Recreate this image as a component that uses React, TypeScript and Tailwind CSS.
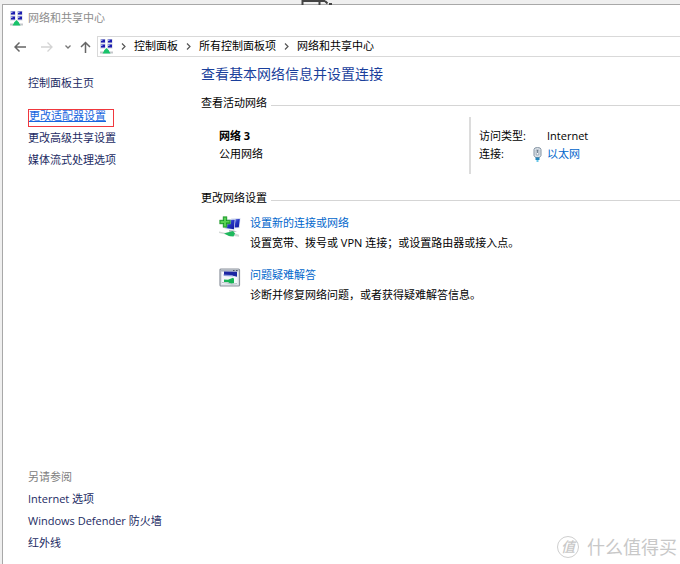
import React from "react";

interface Task {
  title: string;
  description: string;
  icon: React.ReactNode;
}

const crumbs = ["控制面板", "所有控制面板项", "网络和共享中心"];

const seeAlso = ["Internet 选项", "Windows Defender 防火墙", "红外线"];

const NetworkIcon = () => (
  <svg width="13" height="15" viewBox="0 0 13 15" className="shrink-0" aria-hidden="true">
    {[0, 7].map((x) =>
      [0, 5].map((y) => (
        <g key={`${x}-${y}`}>
          <rect x={x} y={y} width="5.500" height="4.500" fill="#d3d7e0" />
          <rect x={x + 1} y={y + 0.5} width="4" height="3" fill="#1c1cb0" />
          <path d={`M${x + 1} ${y + 0.5}h1.500v1.500h-1.500z`} fill="#a9b2ee" />
        </g>
      ))
    )}
    <path d="M0 12.500h13v2H0z" fill="#c4c7cb" />
    <path d="M6.500 9l2.500 2.500V12l1.500 2.500h-8L4 12v-.5z" fill="#18c36a" />
  </svg>
);

const NewConnectionIcon = () => (
  <svg width="22" height="22" viewBox="0 0 22 22" aria-hidden="true">
    <defs>
      <linearGradient id="screen" x1="0" y1="0" x2="1" y2="1">
        <stop offset="0" stopColor="#8fa4ee" />
        <stop offset="0.5" stopColor="#2634c4" />
        <stop offset="1" stopColor="#10189a" />
      </linearGradient>
    </defs>
    <path d="M12 2.500l9.500-.5-1 10-7 .5z" fill="#d5dcee" />
    <path d="M13 3.200l7.800-.3-1 8.300-5.500.3z" fill="url(#screen)" />
    <path d="M5 3.500l11.500-.5-1 11L5.500 13z" fill="#dfe6f5" />
    <path d="M6 4l9.700-.3-.8 9.500L6.500 12z" fill="url(#screen)" />
    <path d="M10 14l5 .5 3 1.500-8-.3z" fill="#b4b8be" />
    <path d="M0 15.500l6 1.200 5-1 3 1 6 2v2l-5-.8-4 .6-4-2-7-1.500z" fill="#d3d8d6" />
    <path d="M5 17.500l9-2.500 2 2.500-1.500 3-4.500-.5z" fill="#1db95c" />
    <path d="M4 .5h4V4h3.500v4H8v3.500H4V8H.5V4H4z" fill="#159a25" stroke="#71bd76" strokeWidth=".6" />
    <path d="M5 1.500h2V5h3.500v1.500H7v4H5V7H1.500V5H5z" fill="#58d252" />
  </svg>
);

const TroubleshootIcon = () => (
  <svg width="22" height="19" viewBox="0 0 22 19" aria-hidden="true">
    <rect x="1" y="1" width="19.500" height="17" rx="1" fill="#dfe4ea" stroke="#8b929c" strokeWidth="1.200" />
    <path d="M2 2h17.500v1.500H2z" fill="#aeb6c2" />
    <path d="M14 2h1.500v1H14zM17 2h1.500v1H17z" fill="#4c5666" />
    <path d="M3 4h15.500v12H3z" fill="#f5f7fa" />
    <path d="M5 3.500l13 .3v5L13 7.500 5 7z" fill="#1b26a2" />
    <path d="M4 6.500l8 .5 3 1.500-10-.5z" fill="#8c9ddc" />
    <path d="M5 11.500l4 .3 5-2 1 1v4.500l-3 .5-3-1.500-4-.3z" fill="#17b455" />
    <path d="M3 14.500l5 .5 5 1.200 5-.7" fill="none" stroke="#b5bec4" />
  </svg>
);

const PlugIcon = () => (
  <svg width="9" height="15" viewBox="0 0 9 15" aria-hidden="true">
    <path d="M1 2.500Q1 .5 4.500.5T8 2.500V8.500L6.500 10.500h-4L1 8.500z" fill="#dce2e8" stroke="#8493a2" />
    <path d="M3.200 3h2.600v5H3.200z" fill="#f9fafb" stroke="#8d9ba9" strokeWidth=".8" />
    <path d="M4.500 3v3" stroke="#58697b" strokeWidth=".8" />
    <path d="M2.500 10.500h4V13h-4z" fill="#2387bd" />
    <path d="M3.500 13h2v2h-2z" fill="#69c7e8" />
  </svg>
);

const Chevron = () => (
  <svg width="21" height="9" viewBox="0 0 21 9" className="shrink-0" aria-hidden="true">
    <path d="M9 1.500l3 3-3 3" fill="none" stroke="#555" strokeWidth="1.200" />
  </svg>
);

const tasks: Task[] = [
  {
    title: "设置新的连接或网络",
    description: "设置宽带、拨号或 VPN 连接；或设置路由器或接入点。",
    icon: <NewConnectionIcon />,
  },
  {
    title: "问题疑难解答",
    description: "诊断并修复网络问题，或者获得疑难解答信息。",
    icon: <TroubleshootIcon />,
  },
];

const SectionTitle = ({ children }: { children: React.ReactNode }) => (
  <div className="flex items-center gap-1 h-5">
    <h2 className="shrink-0">{children}</h2>
    <span className="mt-1 h-px grow bg-[#d5d5d5]"></span>
  </div>
);

const Toolbar = () => (
  <nav className="flex items-center py-[5px] pl-[11px]">
    <button aria-label="后退" className="w-3">
      <svg width="12" height="12" viewBox="0 0 12 12" fill="none" stroke="#666" strokeWidth="1.500">
        <path d="M12 6H1M5.500 1.500L1 6l4.500 4.500" />
      </svg>
    </button>
    <button aria-label="前进" className="ml-[15px] w-3" disabled>
      <svg width="12" height="12" viewBox="0 0 12 12" fill="none" stroke="#d4d4d4" strokeWidth="1.300">
        <path d="M0 6h11M6.500 1.500L11 6l-4.500 4.500" />
      </svg>
    </button>
    <button aria-label="最近的位置" className="ml-3 w-2">
      <svg width="6" height="6" viewBox="0 0 6 6" fill="none" stroke="#777" strokeWidth="1.300">
        <path d="M.5 1.500L3 4l2.500-2.500" />
      </svg>
    </button>
    <button aria-label="向上" className="ml-[7px] w-3">
      <svg width="11" height="12" viewBox="0 0 11 12" fill="none" stroke="#666" strokeWidth="1.500">
        <path d="M5.500 12V1.500M1 6l4.500-4.500L10 6" />
      </svg>
    </button>
    <div className="ml-[5px] flex h-[21px] grow items-center border border-r-0 border-[#d9d9d9] pl-[2px] text-black">
      <NetworkIcon />
      {crumbs.map((crumb) => (
        <React.Fragment key={crumb}>
          <Chevron />
          <button className="shrink-0">{crumb}</button>
        </React.Fragment>
      ))}
    </div>
  </nav>
);

const Sidebar = () => (
  <aside className="flex w-[198px] shrink-0 flex-col pl-[25px] py-[10px] leading-[22px] text-[#1c2b63]">
    <a href="#home">控制面板主页</a>
    <ul className="mt-[11px]">
      <li className="h-[22px] pt-1">
        <a href="#adapter" className="block h-[18px] w-[86px] whitespace-nowrap border border-[#f0383e] leading-3 text-[#1766e0] underline">
          更改适配器设置
        </a>
      </li>
      <li><a href="#sharing">更改高级共享设置</a></li>
      <li><a href="#media">媒体流式处理选项</a></li>
    </ul>
    <div className="mt-auto">
      <h2 className="text-[#808080]">另请参阅</h2>
      <ul>
        {seeAlso.map((item) => (
          <li key={item}><a href="#see-also">{item}</a></li>
        ))}
      </ul>
    </div>
  </aside>
);

const App = () => {
  return (
    <div className="relative flex min-h-screen flex-col bg-[#efefef] pl-[2px] pt-1 text-[11px] font-['Open_Sans','Noto_Sans_CJK_SC',sans-serif]">
      <svg width="32" height="5" viewBox="0 0 32 5" className="absolute left-[301px] top-0" aria-hidden="true">
        <path d="M1.500 5V1h17v4M18 1h6M24 1l2.500 2.500M28 4h3" fill="none" stroke="#444" strokeWidth="2" />
      </svg>
      <div className="flex grow flex-col border-l border-t border-[#a8a8a8] bg-white">
        <header className="flex h-[26px] items-center gap-[5px] pl-[7px] text-[#8c8c8c]">
          <NetworkIcon />
          <h1>网络和共享中心</h1>
        </header>
        <Toolbar />

        <div className="flex grow">
          <Sidebar />
          <main className="min-w-0 grow pt-[2px] text-black">
            <p className="text-sm leading-5 text-[#1a3f9c]">查看基本网络信息并设置连接</p>

            <section className="mt-[9px]">
              <SectionTitle>查看活动网络</SectionTitle>
              <div className="mt-1 flex h-[57px] leading-[18px]">
                <div className="w-[268px] pl-[18px] pt-[10px]">
                  <p className="font-bold">网络 3</p>
                  <p>公用网络</p>
                </div>
                <dl className="grid grid-cols-[54px_auto] content-start border-l-2 border-[#dcdcdc] pl-2 pt-[10px]">
                  <dt>访问类型:</dt>
                  <dd className="pl-[14px]">Internet</dd>
                  <dt>连接:</dt>
                  <dd className="flex items-center gap-[5px]">
                    <PlugIcon />
                    <a href="#ethernet" className="text-[#0066cc]">以太网</a>
                  </dd>
                </dl>
              </div>
            </section>

            <section className="mt-[14px]">
              <SectionTitle>更改网络设置</SectionTitle>
              <ul className="mt-[5px] flex flex-col gap-3 pl-[18px] leading-5">
                {tasks.map((task) => (
                  <li key={task.title} className="flex gap-[9px]">
                    <span className="w-[22px] shrink-0 pt-[3px]">{task.icon}</span>
                    <div>
                      <a href="#task" className="text-[#0066cc]">{task.title}</a>
                      <p>{task.description}</p>
                    </div>
                  </li>
                ))}
              </ul>
            </section>
          </main>
        </div>
      </div>

      <div className="absolute bottom-[5px] right-[3px] flex items-center gap-2 text-lg text-[#c8c8c8]">
        <span className="flex h-[22px] w-[22px] items-center justify-center rounded-full border border-[#cfcfcf] text-sm font-medium italic">值</span>
        <span className="leading-6">什么值得买</span>
      </div>
    </div>
  );
};

export default App;
